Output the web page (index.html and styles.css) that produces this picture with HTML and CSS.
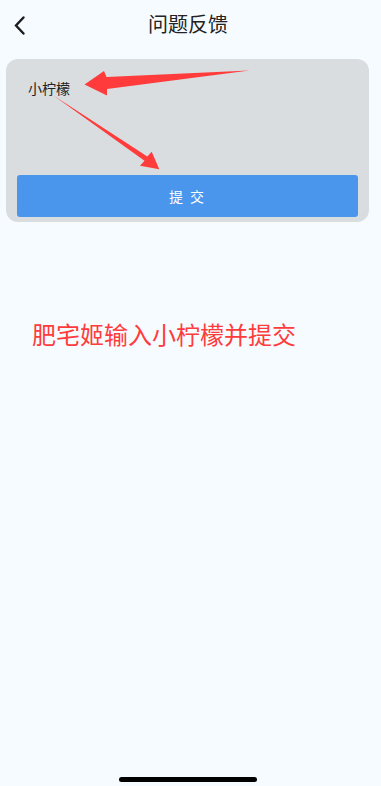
FILE: index.html
```html
<!DOCTYPE html>
<html lang="zh-CN">
<head>
<meta charset="utf-8">
<meta name="viewport" content="width=device-width, initial-scale=1">
<title>问题反馈</title>
<link rel="stylesheet" href="styles.css">
</head>
<body>
<div class="page">
  <header class="nav">
    <div class="nav-left">
      <svg class="back" width="14" height="22" viewBox="0 0 14 22" aria-hidden="true">
        <polyline points="10.5,3.5 3,11.5 10.5,19.5" fill="none" stroke="#1c1c1e" stroke-width="2.4" stroke-linecap="round" stroke-linejoin="miter"/>
      </svg>
    </div>
    <h1 class="nav-title">问题反馈</h1>
    <div class="nav-right"></div>
  </header>

  <section class="card">
    <div class="input-area">小柠檬</div>
    <button class="submit" type="button">提 交</button>
  </section>

  <p class="note">肥宅姬输入小柠檬并提交</p>

  <div class="home-indicator"></div>

  <svg class="annotations" width="381" height="230" viewBox="0 0 381 230" aria-hidden="true">
    <polygon fill="#ff3b3b" points="249.5,70.5 106.5,77 104,71 84.5,84.5 107,95.5 107,89"/>
    <polygon fill="#ff3b3b" points="53.5,95.5 144.5,160.8 140,165.7 159.3,169.2 151.7,151.7 147.3,156.6"/>
  </svg>
</div>
</body>
</html>
```

FILE: styles.css
```css
* {
  box-sizing: border-box;
}

html, body {
  margin: 0;
  padding: 0;
  background: #f6fbff;
}

body {
  font-family: "Noto Sans CJK SC", "Noto Sans", "Liberation Sans", sans-serif;
  color: #1c1c1e;
}

.page {
  position: relative;
  width: 381px;
  min-height: 786px;
  display: flex;
  flex-direction: column;
}

.nav {
  height: 48px;
  display: grid;
  grid-template-columns: 1fr auto 1fr;
  align-items: center;
}

.nav-left {
  display: flex;
  align-items: center;
  padding-left: 13px;
}

.back {
  display: block;
  margin-top: 1px;
}

.nav-title {
  margin: 0 5px 0 0;
  font-size: 20px;
  font-weight: 400;
  line-height: 28px;
  color: #222;
}

.card {
  width: 363px;
  margin: 11px 0 0 6px;
  background: #d9dde0;
  border-radius: 12px;
  padding: 0 11px 5px;
  display: flex;
  flex-direction: column;
}

.input-area {
  height: 116px;
  padding: 19px 0 0 11px;
  font-size: 14px;
  line-height: 20px;
  color: #222;
}

.submit {
  height: 42px;
  width: 100%;
  border: none;
  border-radius: 3px;
  background: #4a96ec;
  color: #ffffff;
  font-family: inherit;
  font-size: 14px;
  line-height: 20px;
  padding: 0;
  letter-spacing: 2px;
}

.note {
  margin: 96px 0 0;
  padding-left: 32px;
  font-size: 24px;
  line-height: 32px;
  color: #ff3b3b;
  font-weight: 400;
}

.home-indicator {
  margin: auto 0 4px 119px;
  width: 138px;
  height: 5px;
  border-radius: 3px;
  background: #000;
}

.annotations {
  position: absolute;
  top: 0;
  left: 0;
  pointer-events: none;
}
```
